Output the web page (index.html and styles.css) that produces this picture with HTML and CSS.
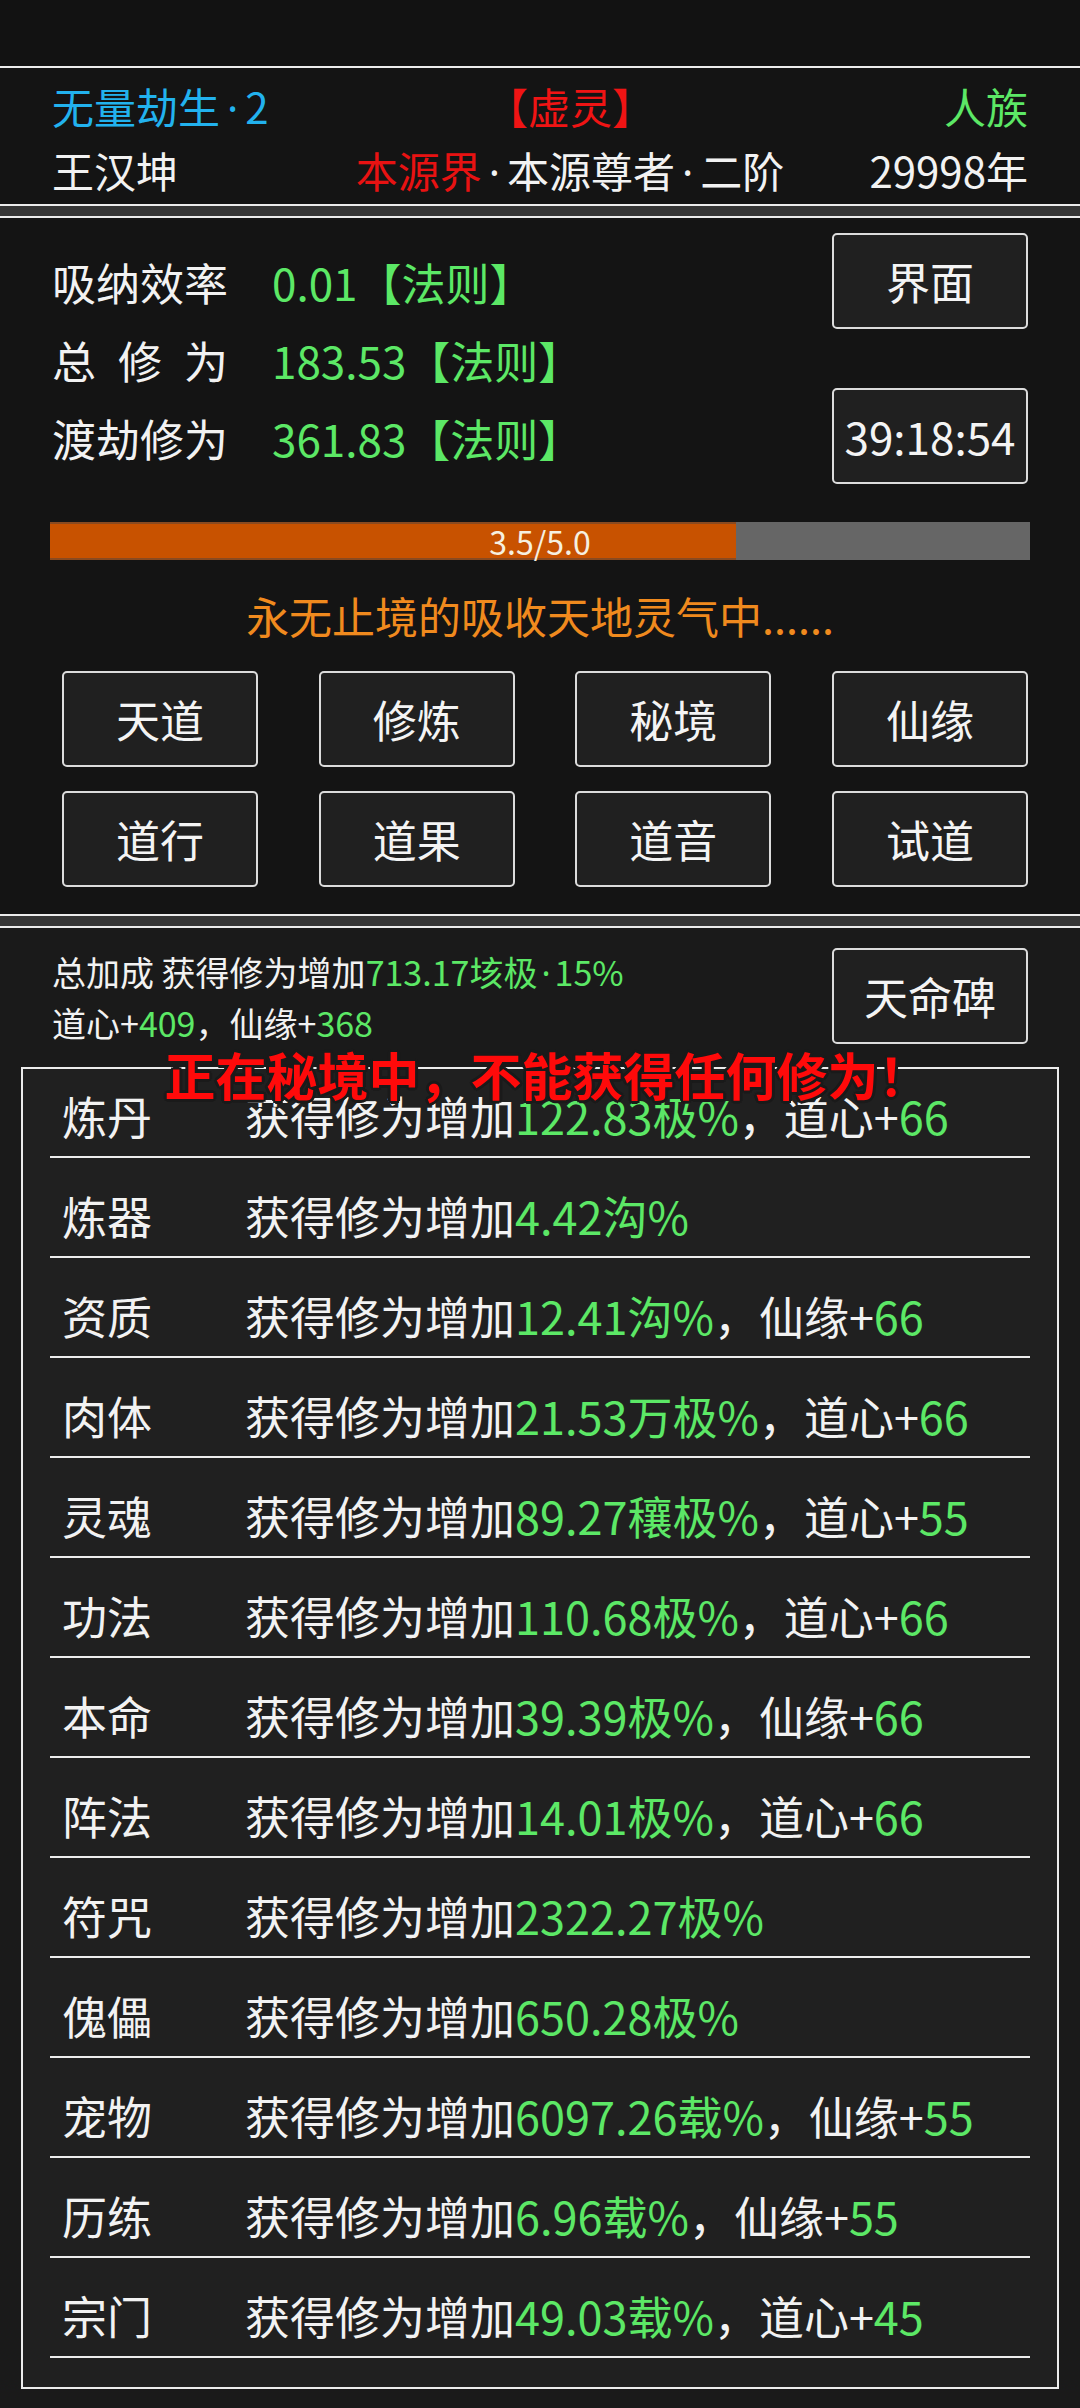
FILE: index.html
```html
<!DOCTYPE html>
<html lang="zh-CN">
<head>
<meta charset="utf-8">
<title>修仙</title>
<link rel="stylesheet" href="styles.css">
</head>
<body>
<div class="topbar"></div>

<section class="panel info">
  <div class="info-row">
    <span class="cell left cyan">无量劫生<span class="dot">·</span>2</span>
    <span class="cell mid red">【虚灵】</span>
    <span class="cell right green">人族</span>
  </div>
  <div class="info-row">
    <span class="cell left">王汉坤</span>
    <span class="cell mid"><span class="red2">本源界</span><span class="dot">·</span>本源尊者<span class="dot">·</span>二阶</span>
    <span class="cell right">29998年</span>
  </div>
</section>

<div class="sep"></div>

<section class="panel main">
  <div class="top">
    <div class="stats">
      <div class="stat"><span class="label">吸纳效率</span><span class="green">0.01【法则】</span></div>
      <div class="stat"><span class="label">总 修 为</span><span class="green">183.53【法则】</span></div>
      <div class="stat"><span class="label">渡劫修为</span><span class="green">361.83【法则】</span></div>
    </div>
    <div class="side">
      <div class="btn">界面</div>
      <div class="btn">39:18:54</div>
    </div>
  </div>
  <div class="bar">
    <div class="fill" style="width:70%"></div>
    <span class="bar-text">3.5/5.0</span>
  </div>
  <div class="status">永无止境的吸收天地灵气中......</div>
  <div class="grid">
    <div class="btn">天道</div>
    <div class="btn">修炼</div>
    <div class="btn">秘境</div>
    <div class="btn">仙缘</div>
    <div class="btn">道行</div>
    <div class="btn">道果</div>
    <div class="btn">道音</div>
    <div class="btn">试道</div>
  </div>
</section>

<div class="sep"></div>

<section class="panel bonus">
  <div class="bonus-top">
    <div class="summary">
      <div>总加成 获得修为增加<span class="green">713.17垓极<span class="dot small">·</span>15%</span></div>
      <div>道心+<span class="green">409</span>，仙缘+<span class="green">368</span></div>
    </div>
    <div class="btn">天命碑</div>
  </div>
  <div class="list">
    <div class="row"><span class="name">炼丹</span><span>获得修为增加<span class="green">122.83极%</span>，道心+<span class="green">66</span></span></div>
    <div class="row"><span class="name">炼器</span><span>获得修为增加<span class="green">4.42沟%</span></span></div>
    <div class="row"><span class="name">资质</span><span>获得修为增加<span class="green">12.41沟%</span>，仙缘+<span class="green">66</span></span></div>
    <div class="row"><span class="name">肉体</span><span>获得修为增加<span class="green">21.53万极%</span>，道心+<span class="green">66</span></span></div>
    <div class="row"><span class="name">灵魂</span><span>获得修为增加<span class="green">89.27穰极%</span>，道心+<span class="green">55</span></span></div>
    <div class="row"><span class="name">功法</span><span>获得修为增加<span class="green">110.68极%</span>，道心+<span class="green">66</span></span></div>
    <div class="row"><span class="name">本命</span><span>获得修为增加<span class="green">39.39极%</span>，仙缘+<span class="green">66</span></span></div>
    <div class="row"><span class="name">阵法</span><span>获得修为增加<span class="green">14.01极%</span>，道心+<span class="green">66</span></span></div>
    <div class="row"><span class="name">符咒</span><span>获得修为增加<span class="green">2322.27极%</span></span></div>
    <div class="row"><span class="name">傀儡</span><span>获得修为增加<span class="green">650.28极%</span></span></div>
    <div class="row"><span class="name">宠物</span><span>获得修为增加<span class="green">6097.26载%</span>，仙缘+<span class="green">55</span></span></div>
    <div class="row"><span class="name">历练</span><span>获得修为增加<span class="green">6.96载%</span>，仙缘+<span class="green">55</span></span></div>
    <div class="row"><span class="name">宗门</span><span>获得修为增加<span class="green">49.03载%</span>，道心+<span class="green">45</span></span></div>
    <div class="warn">正在秘境中，不能获得任何修为！</div>
  </div>
</section>
</body>
</html>
```

FILE: styles.css
```css
* { box-sizing: border-box; }

html, body {
  margin: 0;
  padding: 0;
  background: #121212;
}

body {
  width: 1080px;
  height: 2408px;
  overflow: hidden;
  font-family: "Noto Sans CJK SC", "Noto Sans", sans-serif;
  color: #f2f2f2;
}

.green { color: #5ce866; }
.cyan { color: #22b2ee; }
.red { color: #f01414; }
.red2 { color: #e81212; }

.dot {
  font-family: "Noto Sans", sans-serif;
  padding: 0 7px;
}

.dot.small {
  padding: 0 4px;
}

.topbar {
  height: 66px;
  background: #121212;
}

.panel {
  border-top: 2px solid #ececec;
  border-bottom: 2px solid #ececec;
  background: #141414;
}

.sep {
  height: 10px;
  background: #363636;
}

/* info panel */
.info {
  height: 140px;
  padding: 7px 52px 5px 52px;
}

.info-row {
  display: flex;
  font-size: 42px;
  line-height: 62px;
  white-space: nowrap;
}

.cell.left { width: 260px; }
.cell.mid { flex: 1; text-align: center; }
.cell.right { width: 200px; text-align: right; }

/* main panel */
.main {
  height: 700px;
}

.top {
  display: flex;
  justify-content: space-between;
  align-items: flex-start;
  padding: 15px 52px 0 52px;
}

.stats {
  display: flex;
  flex-direction: column;
  gap: 18px;
  padding-top: 19px;
}

.stat {
  display: flex;
  font-size: 44px;
  line-height: 60px;
  white-space: nowrap;
}

.stat .label {
  display: inline-block;
  width: 176px;
  margin-right: 44px;
  text-align: justify;
  text-align-last: justify;
}

.side {
  display: flex;
  flex-direction: column;
  gap: 59px;
}

.btn {
  width: 196px;
  height: 96px;
  border: 2px solid #dcdcdc;
  border-radius: 5px;
  background: #202020;
  display: flex;
  align-items: center;
  justify-content: center;
  font-size: 44px;
  color: #f4f4f4;
  white-space: nowrap;
}

.bar {
  position: relative;
  margin: 38px 50px 0 50px;
  height: 38px;
  background: #666666;
}

.fill {
  height: 100%;
  background: #c85200;
  box-shadow: inset 0 2px 0 #8a4a20, inset 0 -2px 0 #8a4a20;
}

.bar-text {
  position: absolute;
  left: 0;
  right: 0;
  top: 0;
  text-align: center;
  font-size: 32px;
  line-height: 38px;
  color: #f6f0e0;
}

.status {
  margin-top: 27px;
  text-align: center;
  font-size: 43px;
  line-height: 56px;
  color: #f08a1e;
}

.grid {
  margin-top: 28px;
  padding: 0 52px 0 62px;
  display: flex;
  flex-wrap: wrap;
  justify-content: space-between;
  row-gap: 24px;
}

/* bonus panel */
.bonus {
  background: #1a1a1a;
  border-bottom: none;
  padding-bottom: 20px;
}

.bonus-top {
  display: flex;
  justify-content: space-between;
  align-items: flex-start;
  padding: 0 52px;
}

.summary {
  padding-top: 19px;
  font-size: 34px;
  line-height: 50px;
  white-space: nowrap;
}

.bonus-top .btn {
  margin-top: 20px;
}

.list {
  position: relative;
  margin: 19px 21px 0 21px;
  border: 2px solid #ececec;
  background: #202020;
  padding: 0 27px 29px 27px;
}

.row {
  display: flex;
  font-size: 45px;
  line-height: 50px;
  height: 100px;
  padding-top: 33px;
  border-bottom: 2px solid #ececec;
  white-space: nowrap;
}

.row:first-child {
  height: 89px;
  padding-top: 22px;
}

.row .name {
  width: 195px;
  padding-left: 12px;
  flex-shrink: 0;
}

.warn {
  position: absolute;
  left: 14px;
  right: 0;
  top: -23px;
  text-align: center;
  font-size: 51px;
  line-height: 56px;
  font-weight: 700;
  color: #ff0a0a;
  white-space: nowrap;
  text-shadow:
    3px 0 0 #1a1a1a, -3px 0 0 #1a1a1a, 0 3px 0 #1a1a1a, 0 -3px 0 #1a1a1a,
    2px 2px 0 #1a1a1a, -2px 2px 0 #1a1a1a, 2px -2px 0 #1a1a1a, -2px -2px 0 #1a1a1a;
}
```
